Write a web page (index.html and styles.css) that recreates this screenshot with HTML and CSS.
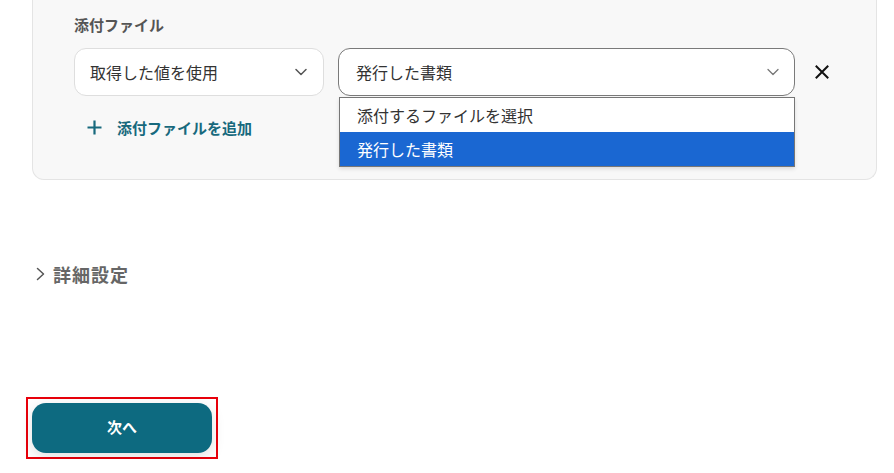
FILE: index.html
```html
<!DOCTYPE html>
<html lang="ja">
<head>
<meta charset="utf-8">
<link rel="stylesheet" href="styles.css">
</head>
<body>
<div class="page">
  <div class="card">
    <div class="label">添付ファイル</div>
    <div class="row">
      <div class="select select-source">
        <span>取得した値を使用</span>
        <svg class="chev" width="12" height="8" viewBox="0 0 12 8"><path d="M1 1.5 L6 6.5 L11 1.5" fill="none" stroke="#555" stroke-width="1.5" stroke-linecap="round" stroke-linejoin="round"/></svg>
      </div>
      <div class="select-wrap">
        <div class="select select-file">
          <span>発行した書類</span>
          <svg class="chev" width="12" height="8" viewBox="0 0 12 8"><path d="M1 1.5 L6 6.5 L11 1.5" fill="none" stroke="#777" stroke-width="1.3" stroke-linecap="round" stroke-linejoin="round"/></svg>
        </div>
        <ul class="options">
          <li class="option">添付するファイルを選択</li>
          <li class="option selected">発行した書類</li>
        </ul>
      </div>
      <svg class="remove" width="14" height="14" viewBox="0 0 14 14"><path d="M1.5 1.5 L12.5 12.5 M12.5 1.5 L1.5 12.5" stroke="#111" stroke-width="2" stroke-linecap="square"/></svg>
    </div>
    <div class="add">
      <svg class="plus" width="15" height="15" viewBox="0 0 15 15"><path d="M7.5 0.5 V14.5 M0.5 7.5 H14.5" stroke="#17697d" stroke-width="2.2"/></svg>
      <span>添付ファイルを追加</span>
    </div>
  </div>

  <div class="details">
    <svg class="details-chev" width="10" height="14" viewBox="0 0 10 14"><path d="M1.5 1.5 L7.5 7 L1.5 12.5" fill="none" stroke="#555" stroke-width="1.5" stroke-linecap="round" stroke-linejoin="round"/></svg>
    <span>詳細設定</span>
  </div>

  <div class="actions">
    <div class="highlight">
      <button class="next">次へ</button>
    </div>
  </div>
</div>
</body>
</html>
```

FILE: styles.css
```css
* { box-sizing: border-box; }
html, body { margin: 0; padding: 0; background: #fff; }
body {
  font-family: "Noto Sans CJK JP", "Noto Sans", sans-serif;
  color: #333;
}
.page { width: 894px; }

.card {
  margin-left: 32px;
  width: 845px;
  background: #f8f8f8;
  border: 1px solid #e4e4e4;
  border-top: none;
  border-radius: 0 0 12px 12px;
  padding: 15px 41px 40px 41px;
}
.label {
  font-size: 15px;
  font-weight: 700;
  line-height: 20px;
  color: #555;
  margin-bottom: 13px;
}
.row {
  display: flex;
  align-items: center;
  gap: 14px;
}
.select {
  height: 48px;
  background: #fff;
  border-radius: 12px;
  display: flex;
  align-items: center;
  justify-content: space-between;
  font-size: 16px;
  color: #333;
}
.select-source {
  width: 250px;
  border: 1px solid #dedede;
  padding: 0 16px 0 15px;
}
.select-wrap {
  position: relative;
  width: 457px;
}
.select-file {
  width: 457px;
  border: 1px solid #7a7a7a;
  padding: 0 15px 0 17px;
}
.chev { display: block; }
.remove { margin-left: 6px; display: block; }

.options {
  position: absolute;
  left: 1px;
  top: 49px;
  width: 456px;
  margin: 0;
  padding: 0;
  list-style: none;
  background: #fff;
  border: 1px solid #767676;
  box-shadow: 0 2px 4px rgba(0,0,0,0.12);
  z-index: 2;
}
.option {
  height: 34px;
  line-height: 34px;
  padding-left: 17px;
  font-size: 16px;
  color: #333;
}
.option.selected {
  background: #1a67d2;
  color: #fff;
}

.add {
  margin-top: 19px;
  height: 24px;
  display: flex;
  align-items: center;
  padding-left: 13px;
  gap: 15px;
  color: #17697d;
  font-size: 15px;
  font-weight: 700;
}
.plus { display: block; }

.details {
  margin-top: 81px;
  margin-left: 36px;
  height: 26px;
  display: flex;
  align-items: center;
  gap: 7px;
  font-size: 18px;
  font-weight: 700;
  letter-spacing: 1px;
  color: #666;
}
.details-chev { display: block; }

.actions {
  margin-top: 110px;
  padding-left: 26px;
}
.highlight {
  display: inline-block;
  border: 2px solid #e8000b;
  padding: 4px;
}
.next {
  display: block;
  width: 180px;
  height: 50px;
  padding: 0 0 3px 0;
  border: none;
  border-radius: 14px;
  background: #0d6a80;
  color: #fff;
  font-family: "Noto Sans CJK JP", "Noto Sans", sans-serif;
  font-size: 15px;
  font-weight: 700;
  box-shadow: 0 4px 14px rgba(0,0,0,0.12);
}
```
